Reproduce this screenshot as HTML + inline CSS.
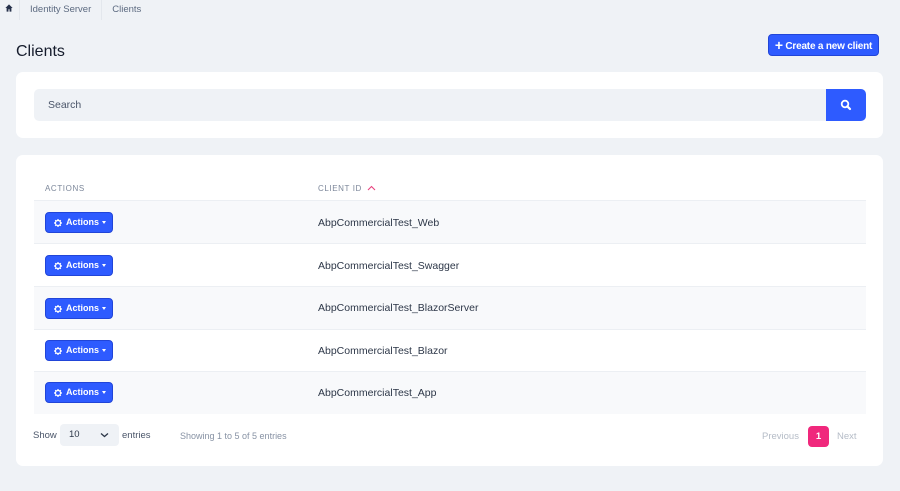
<!DOCTYPE html>
<html><head><style>
*{box-sizing:border-box;margin:0;padding:0}
body{width:900px;height:491px;background:#eff2f6;font-family:"Liberation Sans",sans-serif;color:#25304a;position:relative;overflow:hidden}
.bc{position:absolute;top:0;left:0;height:20px;display:flex;font-size:9.5px;color:#5c6a80;align-items:center}
.bc span{padding:0 10px;border-right:1px solid #e3e7ed;height:20px;line-height:20px}
h1{position:absolute;left:16px;top:43px;font-size:16px;font-weight:normal;color:#151c2c}
.create{position:absolute;left:768px;top:34px;width:111px;height:22px;background:#2e5bff;border-radius:4px;color:#fff;font-size:10px;font-weight:bold;line-height:20px;text-align:center;border:1px solid #2145d8;letter-spacing:-.2px}
.create b{font-size:14px;vertical-align:-1px}
.card{position:absolute;left:16px;width:867px;background:#fff;border-radius:7px}
.search{position:absolute;left:34px;top:89px;width:792px;height:32px;background:#eff2f6;border-radius:5px 0 0 5px;font-size:10.5px;color:#4a5569;line-height:32px;padding-left:14px}
.sbtn{position:absolute;left:826px;top:89px;width:40px;height:32px;background:#2e5bff;border-radius:0 5px 5px 0}
.th{position:absolute;top:184px;font-size:8px;letter-spacing:.6px;color:#7c879a}
.row{position:absolute;left:34px;width:832px;border-top:1px solid #eceff3}
.row.g{background:#f8f9fb}
.act{position:absolute;left:11px;width:68px;height:21px;background:#2e5bff;border:1px solid #2145d8;border-radius:4px;color:#fff;font-size:9px;font-weight:bold;line-height:19px;padding-left:8px;display:flex;align-items:center}
.act svg{margin-right:4px}
.act i{display:inline-block;border-left:2.5px solid transparent;border-right:2.5px solid transparent;border-top:3px solid #fff;margin-left:3px}
.cid{position:absolute;left:284px;font-size:10.5px;color:#2d3748}
.ft{position:absolute;font-size:9.5px}
</style></head><body>
<div class="bc"><span style="padding:0 6px 0 5px"><svg width="8" height="8" viewBox="0 0 10 10"><path d="M5 0.5L0.5 5H2v4.5h2.3V6.5h1.4v3H8V5h1.5z" fill="#25304a"/></svg></span><span>Identity Server</span><span style="border:none">Clients</span></div>
<h1>Clients</h1>
<div class="create"><b>+</b> Create a new client</div>
<div class="card" style="top:72px;height:66px"></div>
<div class="search">Search</div>
<div class="sbtn"><svg width="40" height="32" viewBox="0 0 40 32"><circle cx="19" cy="15" r="3.3" fill="none" stroke="#fff" stroke-width="1.8"/><path d="M21.3 17.3L24 20" stroke="#fff" stroke-width="2.2" stroke-linecap="round"/></svg></div>
<div class="card" style="top:155px;height:311px"></div>
<div class="th" style="left:45px">ACTIONS</div>
<div class="th" style="left:318px">CLIENT ID <svg width="9" height="6" viewBox="0 0 9 6" style="margin-left:2px"><path d="M1 5L4.5 1.5L8 5" fill="none" stroke="#e8437f" stroke-width="1.1"/></svg></div>
<div class="row g" style="top:200px;height:43px"><div class="act" style="top:11px"><svg width="8" height="8" viewBox="0 0 10 10"><circle cx="5" cy="5" r="3.2" fill="none" stroke="#fff" stroke-width="1.6"/><path d="M5 0v2M5 8v2M0 5h2M8 5h2M1.5 1.5l1.4 1.4M7.1 7.1l1.4 1.4M1.5 8.5l1.4-1.4M7.1 2.9l1.4-1.4" stroke="#fff" stroke-width="1.5"/></svg>Actions<i></i></div><div class="cid" style="top:16px">AbpCommercialTest_Web</div></div>
<div class="row" style="top:243px;height:43px"><div class="act" style="top:11px"><svg width="8" height="8" viewBox="0 0 10 10"><circle cx="5" cy="5" r="3.2" fill="none" stroke="#fff" stroke-width="1.6"/><path d="M5 0v2M5 8v2M0 5h2M8 5h2M1.5 1.5l1.4 1.4M7.1 7.1l1.4 1.4M1.5 8.5l1.4-1.4M7.1 2.9l1.4-1.4" stroke="#fff" stroke-width="1.5"/></svg>Actions<i></i></div><div class="cid" style="top:16px">AbpCommercialTest_Swagger</div></div>
<div class="row g" style="top:286px;height:43px"><div class="act" style="top:11px"><svg width="8" height="8" viewBox="0 0 10 10"><circle cx="5" cy="5" r="3.2" fill="none" stroke="#fff" stroke-width="1.6"/><path d="M5 0v2M5 8v2M0 5h2M8 5h2M1.5 1.5l1.4 1.4M7.1 7.1l1.4 1.4M1.5 8.5l1.4-1.4M7.1 2.9l1.4-1.4" stroke="#fff" stroke-width="1.5"/></svg>Actions<i></i></div><div class="cid" style="top:15px">AbpCommercialTest_BlazorServer</div></div>
<div class="row" style="top:329px;height:42px"><div class="act" style="top:10px"><svg width="8" height="8" viewBox="0 0 10 10"><circle cx="5" cy="5" r="3.2" fill="none" stroke="#fff" stroke-width="1.6"/><path d="M5 0v2M5 8v2M0 5h2M8 5h2M1.5 1.5l1.4 1.4M7.1 7.1l1.4 1.4M1.5 8.5l1.4-1.4M7.1 2.9l1.4-1.4" stroke="#fff" stroke-width="1.5"/></svg>Actions<i></i></div><div class="cid" style="top:15px">AbpCommercialTest_Blazor</div></div>
<div class="row g" style="top:371px;height:43px"><div class="act" style="top:10px"><svg width="8" height="8" viewBox="0 0 10 10"><circle cx="5" cy="5" r="3.2" fill="none" stroke="#fff" stroke-width="1.6"/><path d="M5 0v2M5 8v2M0 5h2M8 5h2M1.5 1.5l1.4 1.4M7.1 7.1l1.4 1.4M1.5 8.5l1.4-1.4M7.1 2.9l1.4-1.4" stroke="#fff" stroke-width="1.5"/></svg>Actions<i></i></div><div class="cid" style="top:15px">AbpCommercialTest_App</div></div>
<div class="ft" style="left:33px;top:430px;color:#4a5569">Show</div>
<div style="position:absolute;left:60px;top:424px;width:59px;height:22px;background:#eff2f6;border-radius:4px;font-size:9.5px;line-height:22px;padding-left:9px;color:#2d3748">10<svg style="position:absolute;left:40px;top:8px" width="9" height="6" viewBox="0 0 9 6"><path d="M1 1.5L4.5 4.5L8 1.5" fill="none" stroke="#2d3748" stroke-width="1.3"/></svg></div>
<div class="ft" style="left:122px;top:430px;color:#4a5569">entries</div>
<div class="ft" style="left:180px;top:431px;color:#8792a4;font-size:9px">Showing 1 to 5 of 5 entries</div>
<div class="ft" style="left:762px;top:431px;color:#b5bcc7">Previous</div>
<div style="position:absolute;left:808px;top:426px;width:21px;height:21px;background:#f0287c;border-radius:4px;color:#fff;font-size:9.5px;font-weight:bold;text-align:center;line-height:21px">1</div>
<div class="ft" style="left:837px;top:431px;color:#b5bcc7">Next</div>
</body></html>
